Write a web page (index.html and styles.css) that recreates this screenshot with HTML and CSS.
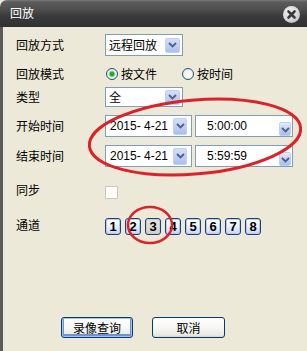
FILE: index.html
```html
<!DOCTYPE html>
<html>
<head>
<meta charset="utf-8">
<link rel="stylesheet" href="styles.css">
</head>
<body>
<div class="win">
  <div class="titlebar">
    <span class="title">回放</span>
    <span class="close">
      <svg width="17" height="17" viewBox="0 0 17 17">
        <path d="M5.5 5.5 L11.5 11.5 M11.5 5.5 L5.5 11.5" stroke="#3a3a3a" stroke-width="2.6" stroke-linecap="round"/>
      </svg>
    </span>
  </div>
  <div class="body">
    <div class="row r1">
      <span class="lbl">回放方式</span>
      <div class="combo w78 h22"><span class="val">远程回放</span><span class="dd"><svg width="9" height="6" viewBox="0 0 9 6"><path d="M1 1 L4.5 4.5 L8 1" fill="none" stroke="#4d6185" stroke-width="1.8"/></svg></span></div>
    </div>
    <div class="row r2">
      <span class="lbl">回放模式</span>
      <label class="radio"><span class="dot on"></span>按文件</label>
      <label class="radio r-b"><span class="dot"></span>按时间</label>
    </div>
    <div class="row r3">
      <span class="lbl">类型</span>
      <div class="combo w78 h20"><span class="val">全</span><span class="dd"><svg width="9" height="6" viewBox="0 0 9 6"><path d="M1 1 L4.5 4.5 L8 1" fill="none" stroke="#4d6185" stroke-width="1.8"/></svg></span></div>
    </div>
    <div class="row r4">
      <span class="lbl">开始时间</span>
      <div class="combo date"><span class="val num">2015- 4-21</span><span class="dd tall"><svg width="9" height="6" viewBox="0 0 9 6"><path d="M1 1 L4.5 4.5 L8 1" fill="none" stroke="#4d6185" stroke-width="1.8"/></svg></span></div>
      <div class="combo time"><span class="val num">5:00:00</span><span class="dd spin"><svg width="9" height="6" viewBox="0 0 9 6"><path d="M1 1 L4.5 4.5 L8 1" fill="none" stroke="#4d6185" stroke-width="1.8"/></svg></span></div>
    </div>
    <div class="row r5">
      <span class="lbl">结束时间</span>
      <div class="combo date"><span class="val num">2015- 4-21</span><span class="dd tall"><svg width="9" height="6" viewBox="0 0 9 6"><path d="M1 1 L4.5 4.5 L8 1" fill="none" stroke="#4d6185" stroke-width="1.8"/></svg></span></div>
      <div class="combo time"><span class="val num">5:59:59</span><span class="dd spin"><svg width="9" height="6" viewBox="0 0 9 6"><path d="M1 1 L4.5 4.5 L8 1" fill="none" stroke="#4d6185" stroke-width="1.8"/></svg></span></div>
    </div>
    <div class="row r6">
      <span class="lbl">同步</span>
      <span class="check"></span>
    </div>
    <div class="row r7">
      <span class="lbl">通道</span>
      <div class="chans">
        <span class="ch">1</span><span class="ch">2</span><span class="ch pressed">3</span><span class="ch">4</span><span class="ch">5</span><span class="ch">6</span><span class="ch">7</span><span class="ch">8</span>
      </div>
    </div>
    <div class="row r8">
      <button class="btn def">录像查询</button>
      <button class="btn">取消</button>
    </div>
  </div>
  <svg class="marks" width="307" height="351" viewBox="0 0 307 351">
    <ellipse cx="195" cy="137" rx="106" ry="37" transform="rotate(-5 195 137)" fill="none" stroke="#dc2229" stroke-width="3"/>
    <ellipse cx="150" cy="225" rx="22" ry="18" fill="none" stroke="#dc2229" stroke-width="2.5"/>
  </svg>
</div>
</body>
</html>
```

FILE: styles.css
```css
html, body {
  margin: 0;
  padding: 0;
  background: #ece9d8;
}
.win {
  position: relative;
  width: 307px;
  height: 351px;
  overflow: hidden;
  border-top-left-radius: 7px;
  background: #ece9d8;
  font-family: "Noto Sans CJK SC", "Liberation Sans", sans-serif;
  font-size: 12px;
  color: #000;
}
.titlebar {
  height: 27px;
  box-sizing: border-box;
  display: flex;
  align-items: center;
  justify-content: space-between;
  padding: 0 7px 0 10px;
  background: linear-gradient(to bottom, #7a7a7a 0, #5c5c5c 2px, #4e4e4e 35%, #3a3a3a 60%, #303030 100%);
}
.title {
  color: #fff;
  font-size: 12px;
  line-height: 14px;
  margin-top: -2px;
}
.close {
  width: 17px;
  height: 17px;
  border-radius: 50%;
  background: radial-gradient(circle at 40% 35%, #f4f4f4 0, #d6d6d6 55%, #a9a9a9 100%);
  display: flex;
  margin-top: 1px;
}
.body {
  height: 324px;
  box-sizing: border-box;
  border-left: 3px solid #5a5a5a;
  padding-left: 13px;
  display: flex;
  flex-direction: column;
}
.row {
  display: flex;
  align-items: center;
}
.lbl {
  width: 89px;
  flex: none;
  line-height: 14px;
}
.r1 { margin-top: 7px; height: 22px; }
.r2 { margin-top: 7px; height: 22px; }
.r3 { margin-top: 2px; height: 20px; }
.r4 { margin-top: 8px; height: 22px; }
.r5 { margin-top: 8px; height: 22px; }
.r6 { margin-top: 13px; height: 20px; }
.r7 { margin-top: 15px; height: 20px; }
.r8 { margin-top: 82px; height: 21px; padding-left: 45px; gap: 19px; }

.combo {
  box-sizing: border-box;
  border: 1px solid #7f9db9;
  background: #fff;
  display: flex;
  align-items: center;
  justify-content: space-between;
  flex: none;
}
.w78 { width: 78px; }
.h22 { height: 22px; }
.h20 { height: 20px; }
.date { width: 87px; height: 22px; }
.time { width: 98px; height: 22px; margin-left: 3px; }
.val {
  padding-left: 3px;
  line-height: 14px;
  white-space: pre;
}
.num {
  font-family: "Liberation Sans", "DejaVu Sans", sans-serif;
  font-size: 12px;
}
.date .val { padding-left: 4px; }
.time .val { padding-left: 11px; }
.dd {
  width: 15px;
  height: 15px;
  margin-right: 2px;
  box-sizing: border-box;
  border-radius: 2px;
  background: linear-gradient(to bottom, #d3def9 0, #bccdf6 60%, #a9bff2 100%);
  border: 1px solid #c0cff3;
  display: flex;
  align-items: center;
  justify-content: center;
}
.dd.tall {
  width: 14px;
  height: 17px;
  margin-right: 4px;
}
.dd.spin {
  width: 12px;
  height: 14px;
  margin-right: 1px;
  margin-top: 6px;
  align-items: flex-end;
  padding-bottom: 2px;
  background: linear-gradient(to bottom, #e4ebfb 0, #c2d1f6 50%, #a9bff2 100%);
}

.radio {
  display: flex;
  align-items: center;
  line-height: 14px;
  margin-left: 1px;
}
.radio.r-b { margin-left: 25px; }
.dot {
  width: 12px;
  height: 12px;
  box-sizing: border-box;
  border-radius: 50%;
  border: 1px solid #1c5180;
  background: radial-gradient(circle at 60% 60%, #ffffff 0, #e6e6dd 100%);
  margin-right: 3px;
  display: flex;
  align-items: center;
  justify-content: center;
}
.dot.on::after {
  content: "";
  width: 4px;
  height: 4px;
  border-radius: 50%;
  background: #21a121;
  box-shadow: 0 0 1px 1px #5cc85c;
}

.check {
  width: 13px;
  height: 13px;
  box-sizing: border-box;
  border: 1px solid #cac8bb;
  background: #fff;
  margin-left: 0;
  margin-top: 4px;
}

.chans {
  display: flex;
  gap: 4px;
  margin-top: 3px;
}
.ch {
  width: 16px;
  height: 17px;
  box-sizing: border-box;
  border: 1px solid #203e78;
  border-radius: 3px;
  background: linear-gradient(to bottom, #ffffff 0, #f2f5fd 40%, #c8d5f3 100%);
  box-shadow: inset 0 0 0 1px #b8c9ef;
  font-family: "Liberation Sans", "DejaVu Sans", sans-serif;
  font-weight: bold;
  font-size: 13px;
  line-height: 15px;
  text-align: center;
}
.ch.pressed {
  background: linear-gradient(to bottom, #e2e2e0 0, #dcdbd6 60%, #cfcec8 100%);
  box-shadow: inset 0 0 0 1px #c9c8c2;
}

.btn {
  width: 72px;
  height: 21px;
  box-sizing: border-box;
  border: 1px solid #003c74;
  border-radius: 3px;
  background: linear-gradient(to bottom, #ffffff 0, #f7f7f4 50%, #e9e8e1 90%, #d6d0c5 100%);
  font-family: "Noto Sans CJK SC", sans-serif;
  font-size: 12px;
  line-height: 14px;
  color: #000;
  padding: 0;
}
.btn + .btn { width: 73px; }
.btn.def {
  box-shadow: inset 0 0 0 1px #a7c2ee, inset 0 -1px 0 2px #6f8fd8;
}

.marks {
  position: absolute;
  left: 0;
  top: 0;
  pointer-events: none;
}
```
